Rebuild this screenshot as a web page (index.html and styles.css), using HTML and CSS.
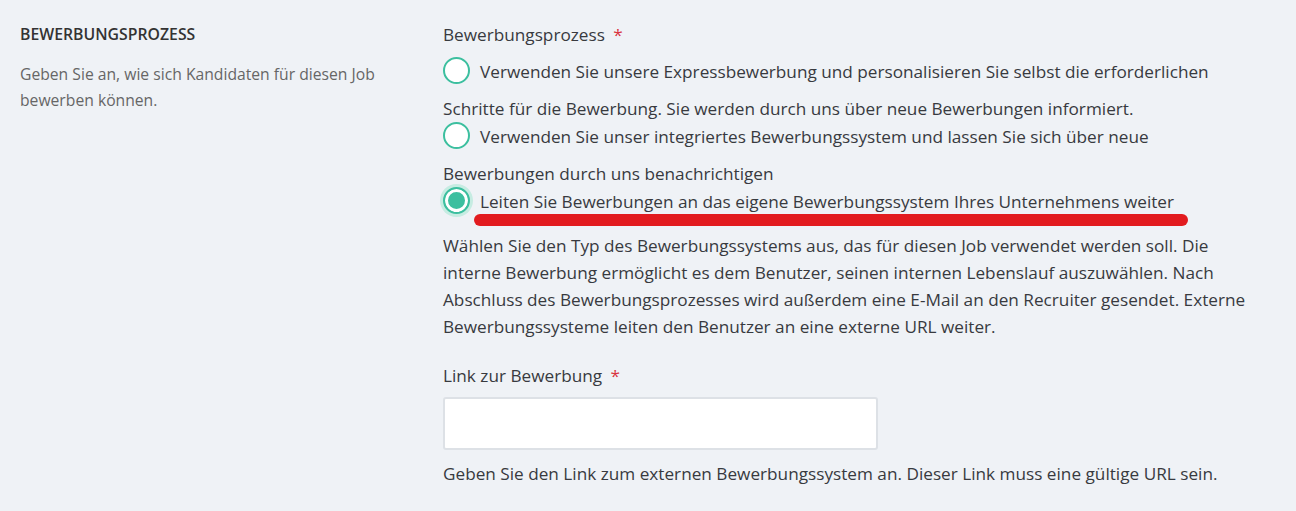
FILE: index.html
```html
<!DOCTYPE html>
<html lang="de">

<head>
    <meta charset="UTF-8">
    <meta name="viewport" content="width=device-width, initial-scale=1.0">
    <title>Bewerbungsprozess</title>
    <link rel="stylesheet" href="styles.css">
</head>

<body>
    <div class="section">
        <div class="section-info">
            <h4 class="section-title">BEWERBUNGSPROZESS</h4>
            <p class="section-text">Geben Sie an, wie sich Kandidaten für diesen Job bewerben können.</p>
        </div>
        <div class="section-fields">
            <div class="field">
                <label class="field-label">Bewerbungsprozess <span class="required">*</span></label>
                <div class="radio-option">
                    <span class="radio"></span>Verwenden Sie unsere Expressbewerbung und personalisieren Sie selbst die erforderlichen Schritte für die Bewerbung. Sie werden durch uns über neue Bewerbungen informiert.
                </div>
                <div class="radio-option">
                    <span class="radio"></span>Verwenden Sie unser integriertes Bewerbungssystem und lassen Sie sich über neue Bewerbungen durch uns benachrichtigen
                </div>
                <div class="radio-option marked">
                    <span class="radio checked"></span>Leiten Sie Bewerbungen an das eigene Bewerbungssystem Ihres Unternehmens weiter
                    <span class="red-mark"></span>
                </div>
                <p class="field-help">Wählen Sie den Typ des Bewerbungssystems aus, das für diesen Job verwendet werden soll. Die interne Bewerbung ermöglicht es dem Benutzer, seinen internen Lebenslauf auszuwählen. Nach Abschluss des Bewerbungsprozesses wird außerdem eine E-Mail an den Recruiter gesendet. Externe Bewerbungssysteme leiten den Benutzer an eine externe URL weiter.</p>
            </div>
            <div class="field">
                <label class="field-label">Link zur Bewerbung <span class="required">*</span></label>
                <input type="text" class="text-input">
                <p class="field-help">Geben Sie den Link zum externen Bewerbungssystem an. Dieser Link muss eine gültige URL sein.</p>
            </div>
        </div>
    </div>
</body>

</html>
```

FILE: styles.css
```css
body {
    margin: 0;
    background: #eff2f6;
    font-family: "Open Sans", "Noto Sans", sans-serif;
    color: #383a3f;
}

.section {
    display: flex;
    flex-direction: row;
    padding-top: 22px;
}

.section-info {
    width: 443px;
    padding-left: 20px;
    box-sizing: border-box;
    padding-right: 40px;
}

.section-title {
    margin: 3px 0 0 0;
    font-size: 15.8px;
    font-weight: 600;
    color: #333;
    line-height: 18px;
}

.section-text {
    margin: 18px 0 0 0;
    font-size: 15.7px;
    line-height: 26px;
    color: #666;
}

.section-fields {
    flex: 1;
    padding-right: 46px;
    font-size: 17.2px;
}

.field {
    margin-bottom: 23px;
}

.field-label {
    display: block;
    line-height: 26px;
    margin-bottom: 8px;
}

.required {
    color: #d9343f;
    margin-left: 4px;
}

.radio-option {
    position: relative;
    line-height: 24px;
}

.radio {
    display: inline-block;
    width: 27px;
    height: 27px;
    box-sizing: border-box;
    border: 2px solid #3cbf9f;
    border-radius: 50%;
    background: #fff;
    vertical-align: -19px;
    margin: 1px 10px 13px 0;
}

.radio.checked {
    background: #3cbf9f;
    box-shadow: inset 0 0 0 3px #fff, 0 0 0 3px #c6ece2;
}

.red-mark {
    position: absolute;
    left: 31px;
    top: 28px;
    width: 714px;
    height: 12px;
    border-radius: 6px;
    background: #e21b1f;
}

.field-help {
    margin: 5px 0 0 0;
    line-height: 27px;
}

.text-input {
    display: block;
    width: 435px;
    height: 53px;
    box-sizing: border-box;
    margin: 8px 0 10px 0;
    border: 2px solid #dde1e6;
    border-radius: 3px;
    background: #fff;
    outline: none;
}
```
